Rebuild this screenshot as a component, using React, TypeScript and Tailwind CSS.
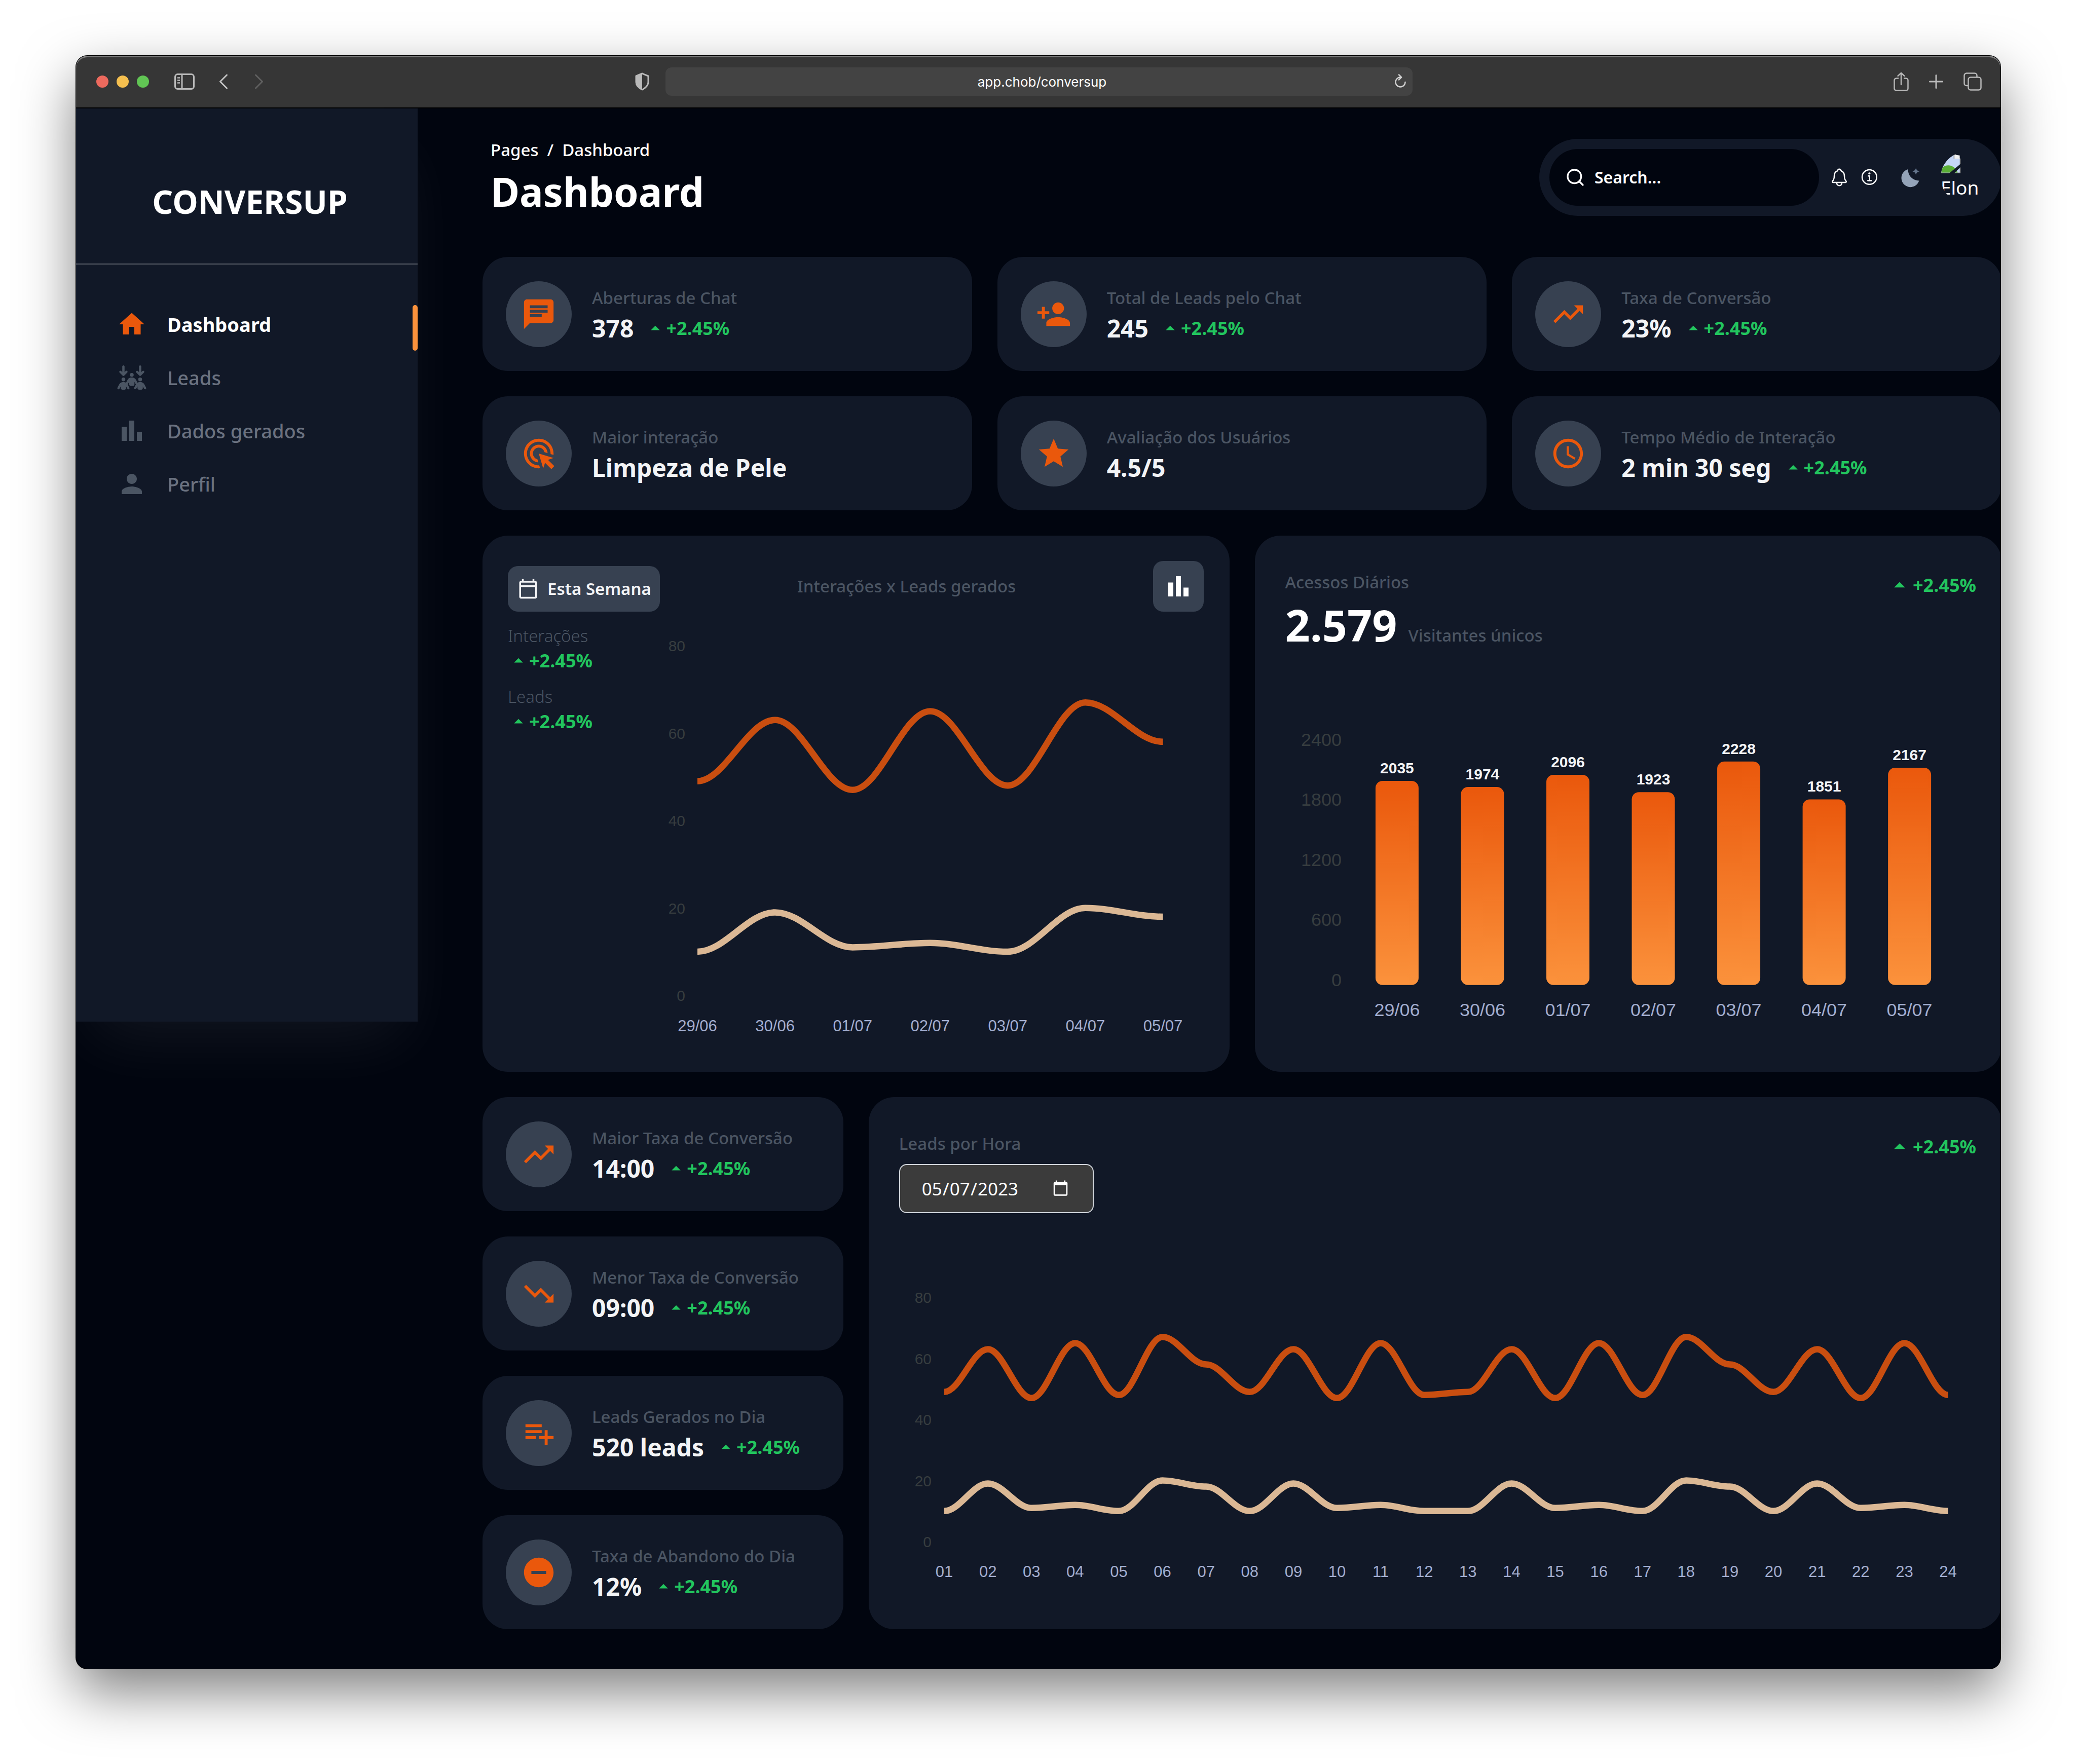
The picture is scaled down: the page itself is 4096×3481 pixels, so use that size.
import React from "react";
import type { ReactNode } from "react";
import type { IconType } from "react-icons";
import {
  MdAccessTime,
  MdAdsClick,
  MdArrowDropUp,
  MdBarChart,
  MdChat,
  MdHome,
  MdOutlineCalendarToday,
  MdPerson,
  MdPersonAdd,
  MdPlaylistAdd,
  MdRemoveCircle,
  MdStar,
  MdTrendingDown,
  MdTrendingUp,
} from "react-icons/md";
import { FaArrowsDownToPeople } from "react-icons/fa6";
import { FiSearch } from "react-icons/fi";
import { IoInformationCircleOutline, IoNotificationsOutline } from "react-icons/io5";

/* ---------- Browser chrome ---------- */

function SidebarToggleIcon() {
  return (
    <svg viewBox="0 0 40 32" className="h-8 w-10" fill="none" stroke="#b9b9b9" strokeWidth="3">
      <rect x="1.5" y="1.5" width="37" height="29" rx="5" />
      <path d="M15 2v28" />
      <path d="M6 8.500h5M6 13.500h5M6 18.500h5" strokeWidth="2.500" />
    </svg>
  );
}

function ShieldIcon() {
  return (
    <svg viewBox="0 0 30 36" className="h-9 w-[30px]">
      <path
        d="M15 2 27 7v12c0 6-4.500 11-12 15C7.500 30 3 25 3 19V7z"
        fill="none"
        stroke="#b9b9b9"
        strokeWidth="3"
        strokeLinejoin="round"
      />
      <path d="M15 2v32C7.500 30 3 25 3 19V7z" fill="#b9b9b9" />
    </svg>
  );
}

function ReloadIcon() {
  return (
    <svg viewBox="0 0 26 30" className="h-[30px] w-[26px]" fill="none" stroke="#d2d2d2" strokeWidth="2.500">
      <path d="M14 6.500a9.500 9.500 0 1 0 9.500 9.500" strokeLinecap="round" />
      <path d="M11 1.500 16 6.500 11 11.500" strokeLinecap="round" strokeLinejoin="round" />
    </svg>
  );
}

function ShareIcon() {
  return (
    <svg viewBox="0 0 30 38" className="h-[38px] w-[30px]" fill="none" stroke="#b9b9b9" strokeWidth="2.500">
      <path d="M10 12.500H5.500a4 4 0 0 0-4 4v16a4 4 0 0 0 4 4h19a4 4 0 0 0 4-4v-16a4 4 0 0 0-4-4H20" />
      <path d="M15 25V2M8.500 8 15 1.800 21.500 8" strokeLinecap="round" strokeLinejoin="round" />
    </svg>
  );
}

function TabsIcon() {
  return (
    <svg viewBox="0 0 36 36" className="h-9 w-9" fill="none" stroke="#b9b9b9" strokeWidth="2.500">
      <rect x="9.500" y="9.500" width="25" height="25" rx="4.500" />
      <path d="M9 26H6a4.500 4.500 0 0 1-4.500-4.500V6A4.500 4.500 0 0 1 6 1.500h16A4.500 4.500 0 0 1 26.500 6v3" />
    </svg>
  );
}

function TitleBar() {
  return (
    <div className="flex h-[104px] items-center rounded-t-[22px] border-b-2 border-black bg-[#363636] pr-[37px] pl-10 shadow-[inset_0_3px_0_#7d7d7d]">
      <div className="flex flex-1 items-center">
        <div className="flex gap-4">
          <button aria-label="Fechar" className="size-6 rounded-full bg-[#ed6a5e]" />
          <button aria-label="Minimizar" className="size-6 rounded-full bg-[#f5bf4f]" />
          <button aria-label="Maximizar" className="size-6 rounded-full bg-[#61c554]" />
        </div>
        <button aria-label="Barra lateral" className="ml-[50px]">
          <SidebarToggleIcon />
        </button>
        <button aria-label="Voltar" className="ml-12">
          <svg viewBox="0 0 18 30" className="h-[30px] w-[18px]" fill="none" stroke="#c4c4c4" strokeWidth="3">
            <path d="M15.500 2 2.500 15l13 13" strokeLinecap="round" strokeLinejoin="round" />
          </svg>
        </button>
        <button aria-label="Avançar" className="ml-[52px]">
          <svg viewBox="0 0 18 30" className="h-[30px] w-[18px]" fill="none" stroke="#606060" strokeWidth="3">
            <path d="m2.500 2 13 13-13 13" strokeLinecap="round" strokeLinejoin="round" />
          </svg>
        </button>
        <button aria-label="Privacidade" className="mr-[31px] ml-auto">
          <ShieldIcon />
        </button>
      </div>
      <div className="relative flex h-14 w-[39.6%] items-center justify-center rounded-xl bg-[#434343] pl-3">
        <span className="font-['Inter',sans-serif] text-[26px] text-white">app.chob/conversup</span>
        <button aria-label="Recarregar" className="absolute right-3">
          <ReloadIcon />
        </button>
      </div>
      <div className="flex flex-1 items-center justify-end">
        <button aria-label="Compartilhar">
          <ShareIcon />
        </button>
        <button aria-label="Nova aba" className="ml-10">
          <svg viewBox="0 0 28 28" className="size-7" stroke="#b9b9b9" strokeWidth="3" strokeLinecap="round">
            <path d="M14 1.500v25M1.500 14h25" />
          </svg>
        </button>
        <button aria-label="Abas" className="ml-10">
          <TabsIcon />
        </button>
      </div>
    </div>
  );
}

/* ---------- Sidebar ---------- */

const routes: { name: string; Icon: IconType; active?: boolean }[] = [
  { name: "Dashboard", Icon: MdHome, active: true },
  { name: "Leads", Icon: FaArrowsDownToPeople },
  { name: "Dados gerados", Icon: MdBarChart },
  { name: "Perfil", Icon: MdPerson },
];

function Sidebar() {
  return (
    <aside className="h-[1802px] w-[674px] shrink-0 bg-[#111827] shadow-[0_62px_125px_-30px_rgba(255,255,255,0.07)]">
      <div className="pt-[152px] pb-[90px] pl-3 text-center text-[64px] leading-[64px] font-bold text-white">
        CONVERSUP
      </div>
      <div className="h-0.5 bg-white/30" />
      <nav className="pt-[65px]">
        {routes.map(({ name, Icon, active }) => (
          <a key={name} href="#" className="relative flex h-[105px] items-center pl-20">
            <Icon className={active ? "size-[60px] text-[#ea580c]" : "size-[60px] text-[#4b5563]"} />
            <span
              className={
                active
                  ? "ml-10 text-[38px] leading-[60px] font-bold text-white"
                  : "ml-10 text-[38px] leading-[60px] font-medium text-[#6b7280]"
              }
            >
              {name}
            </span>
            {active && <span className="absolute right-0 bottom-0 h-[90px] w-2.5 rounded-[8px] bg-[#fb923c]" />}
          </a>
        ))}
      </nav>
    </aside>
  );
}

/* ---------- Header ---------- */

function MoonIcon() {
  return (
    <svg viewBox="0 0 46 49" className="h-[39px] w-9">
      <path d="M17.500 3.500A22.800 22.800 0 1 0 45.300 32 27 27 0 0 1 17.500 3.500z" fill="#94a3b8" />
      <path
        d="M37.300 0c1.200 5 3.500 7.500 8.700 8.700-5.200 1.200-7.500 3.700-8.700 8.700-1.200-5-3.500-7.500-8.700-8.700 5.200-1.200 7.500-3.700 8.700-8.700z"
        fill="#64748b"
      />
    </svg>
  );
}

function MissingPhotoIcon() {
  return (
    <svg viewBox="0 0 50 50" className="size-10">
      <path d="M0 0h34l15 14v36H0z" fill="#8f8f8f" />
      <path d="M2 2h30v12h15v34H2z" fill="#c5d6f6" />
      <path d="M2 40c6-14 32-14 40 8H2z" fill="#5aae36" />
      <path d="M34 4l13 2v8H34z" fill="#f0f0f0" />
      <path d="M50 26v8L33 50H21z" fill="#111827" />
    </svg>
  );
}

function Header() {
  return (
    <header className="flex items-start justify-between">
      <div className="pl-4 text-white">
        <nav className="flex gap-[17px] text-[33px] leading-[44px] font-medium">
          <a href="#">Pages</a>
          <span>/</span>
          <a href="#">Dashboard</a>
        </nav>
        <h1 className="mt-4 text-[78px] leading-[88px] font-bold">Dashboard</h1>
      </div>
      <div className="flex h-[152px] items-center rounded-full bg-[#111827] p-5">
        <label className="flex h-[112px] w-[532px] items-center rounded-full bg-[#01050f] pl-[31px] text-white">
          <FiSearch className="size-10 shrink-0" />
          <input
            type="text"
            aria-label="Search"
            placeholder="Search..."
            className="ml-[18px] w-[380px] bg-transparent text-[32px] font-semibold outline-none placeholder:text-white"
          />
        </label>
        <button aria-label="Notificações" className="ml-5 text-white">
          <IoNotificationsOutline className="size-10" />
        </button>
        <button aria-label="Informações" className="ml-5 text-white">
          <IoInformationCircleOutline className="size-10" />
        </button>
        <button aria-label="Tema" className="ml-[42px]">
          <MoonIcon />
        </button>
        <button className="ml-[42px] size-[100px] overflow-hidden rounded-full text-left text-[37px] leading-[56px] text-white">
          <MissingPhotoIcon />
          Elon
        </button>
      </div>
    </header>
  );
}

/* ---------- Cards ---------- */

function Delta({ large }: { large?: boolean }) {
  return (
    <span className="flex items-center text-[36px] leading-[50px] font-bold text-[#22c55e]">
      <MdArrowDropUp className={large ? "size-[52px]" : "size-[42px]"} />
      +2.45%
    </span>
  );
}

type CardData = { Icon: IconType; title: string; value: string; delta?: boolean };

function StatCard({ Icon, title, value, delta }: CardData) {
  return (
    <div className="flex h-[225px] items-center rounded-[50px] bg-[#111827] pl-[46px]">
      <div className="flex size-[130px] items-center justify-center rounded-full bg-[#374151] text-[#ea580c]">
        <Icon className="size-[70px]" />
      </div>
      <div className="ml-10">
        <p className="text-[33px] leading-[56px] font-medium text-[#4b5563]">{title}</p>
        <div className="flex items-center gap-[22px]">
          <h4 className="text-[48px] leading-[64px] font-bold text-[#f3f4f6]">{value}</h4>
          {delta && <Delta />}
        </div>
      </div>
    </div>
  );
}

const topCards: CardData[] = [
  { Icon: MdChat, title: "Aberturas de Chat", value: "378", delta: true },
  { Icon: MdPersonAdd, title: "Total de Leads pelo Chat", value: "245", delta: true },
  { Icon: MdTrendingUp, title: "Taxa de Conversão", value: "23%", delta: true },
  { Icon: MdAdsClick, title: "Maior interação", value: "Limpeza de Pele" },
  { Icon: MdStar, title: "Avaliação dos Usuários", value: "4.5/5" },
  { Icon: MdAccessTime, title: "Tempo Médio de Interação", value: "2 min 30 seg", delta: true },
];

const dayCards: CardData[] = [
  { Icon: MdTrendingUp, title: "Maior Taxa de Conversão", value: "14:00", delta: true },
  { Icon: MdTrendingDown, title: "Menor Taxa de Conversão", value: "09:00", delta: true },
  { Icon: MdPlaylistAdd, title: "Leads Gerados no Dia", value: "520 leads", delta: true },
  { Icon: MdRemoveCircle, title: "Taxa de Abandono do Dia", value: "12%", delta: true },
];

/* ---------- Charts ---------- */

const days = ["29/06", "30/06", "01/07", "02/07", "03/07", "04/07", "05/07"];
const hours = Array.from({ length: 24 }, (_, i) => String(i + 1).padStart(2, "0"));

const weekInteractions = [49, 63, 47, 65, 48, 67, 58];
const weekLeads = [10, 19, 11, 12, 10, 20, 18];
const hourInteractions = [
  49, 63, 47, 65, 48, 67, 58, 49, 63, 47, 65, 48, 49, 63, 47, 65, 48, 67, 58, 49, 63, 47, 65, 48,
];
const hourLeads = [
  10, 19, 11, 12, 10, 20, 18, 10, 19, 11, 12, 10, 10, 19, 11, 12, 10, 20, 18, 10, 19, 11, 12, 10,
];
const visitors = [2035, 1974, 2096, 1923, 2228, 1851, 2167];

type LineChartProps = {
  width: number;
  height: number;
  left: number;
  step: number;
  top: number;
  bottom: number;
  labelY: number;
  tickX: number;
  labels: string[];
  series: { values: number[]; color: string }[];
  title: string;
};

function LineChart(p: LineChartProps) {
  const y = (v: number) => p.bottom - ((p.bottom - p.top) * v) / 80;
  const path = (values: number[]) =>
    values
      .map((v, i) => {
        const x = p.left + i * p.step;
        if (i === 0) return `M${x} ${y(v)}`;
        const k = p.step * 0.35;
        return `C${x - p.step + k} ${y(values[i - 1])} ${x - k} ${y(v)} ${x} ${y(v)}`;
      })
      .join("");
  return (
    <svg
      viewBox={`0 0 ${p.width} ${p.height}`}
      className="block h-auto w-full font-['Liberation_Sans',Arial,sans-serif]"
      role="img"
      aria-label={p.title}
    >
      {[80, 60, 40, 20, 0].map((t) => (
        <text key={t} x={p.tickX} y={y(t) + 11} textAnchor="end" className="fill-[#373d3f] text-[30px]">
          {t}
        </text>
      ))}
      {p.labels.map((l, i) => (
        <text
          key={l}
          x={p.left + i * p.step}
          y={p.labelY + 11}
          textAnchor="middle"
          className="fill-[#a3aed0] text-[31px]"
        >
          {l}
        </text>
      ))}
      {p.series.map((s) => (
        <path key={s.color} d={path(s.values)} fill="none" stroke={s.color} strokeWidth="12.500" />
      ))}
    </svg>
  );
}

function VisitorsChart() {
  const base = 544;
  return (
    <svg
      viewBox="0 0 1374 664"
      className="block h-auto w-full font-['Liberation_Sans',Arial,sans-serif]"
      role="img"
      aria-label="Acessos Diários"
    >
      <defs>
        <linearGradient id="bar" x1="0" y1="0" x2="0" y2="1">
          <stop offset="0" stopColor="#ea580c" />
          <stop offset="1" stopColor="#fb923c" />
        </linearGradient>
      </defs>
      {[2400, 1800, 1200, 600, 0].map((t, i) => (
        <text key={t} x="121" y={72 + i * 118.5} textAnchor="end" className="fill-[#373d3f] text-[36px]">
          {t}
        </text>
      ))}
      {visitors.map((v, i) => {
        const h = v * 0.198;
        const x = 230.5 + i * 168.6;
        return (
          <g key={days[i]}>
            <rect x={x - 42.5} y={base - h} width="85" height={h} rx="14" fill="url(#bar)" />
            <text
              x={x}
              y={base - h - 15}
              textAnchor="middle"
              className="fill-[#f3f4f6] text-[30px] font-bold"
            >
              {v}
            </text>
            <text x={x} y="605" textAnchor="middle" className="fill-[#a3aed0] text-[36px]">
              {days[i]}
            </text>
          </g>
        );
      })}
    </svg>
  );
}

/* ---------- Panels ---------- */

function Panel({ className, children }: { className: string; children: ReactNode }) {
  return <section className={`rounded-[50px] bg-[#111827] p-[50px] ${className}`}>{children}</section>;
}

function InteractionsPanel() {
  return (
    <Panel className="">
      <div className="flex items-end justify-between">
        <button className="flex h-[90px] items-center gap-[17px] rounded-[20px] bg-[#374151] pr-[17px] pl-[19px] text-[33px] font-semibold text-[#f3f4f6]">
          <MdOutlineCalendarToday className="size-[42px]" />
          Esta Semana
        </button>
        <h2 className="self-center text-[33px] leading-[48px] font-medium text-[#4b5563]">
          Interações x Leads gerados
        </h2>
        <button
          aria-label="Gráfico"
          className="flex size-[100px] items-center justify-center rounded-[20px] bg-[#374151] text-white"
        >
          <MdBarChart className="size-[60px]" />
        </button>
      </div>
      <div className="mt-6 flex">
        <div className="flex w-[300px] shrink-0 flex-col gap-[22px]">
          {["Interações", "Leads"].map((l) => (
            <div key={l}>
              <p className="text-[33px] leading-[48px] font-light text-[#4b5563]">{l}</p>
              <Delta />
            </div>
          ))}
        </div>
        <div className="min-w-0 flex-1">
          <LineChart
            title="Interações x Leads gerados"
            width={1073}
            height={834}
            left={74}
            step={153}
            top={43}
            bottom={733}
            labelY={793}
            tickX={50}
            labels={days}
            series={[
              { values: weekInteractions, color: "#c94e10" },
              { values: weekLeads, color: "#dbb895" },
            ]}
          />
        </div>
      </div>
    </Panel>
  );
}

function VisitorsPanel() {
  return (
    <Panel className="">
      <div className="flex items-start justify-between pt-[18px] pl-2.5">
        <div>
          <h2 className="text-[33px] leading-[48px] font-medium text-[#4b5563]">Acessos Diários</h2>
          <p className="mt-4 flex items-baseline gap-[22px]">
            <span className="text-[86px] leading-[88px] font-bold text-white">2.579</span>
            <span className="text-[33px] leading-[48px] font-medium text-[#4b5563]">Visitantes únicos</span>
          </p>
        </div>
        <div className="pt-1">
          <Delta large />
        </div>
      </div>
      <div className="mt-[122px]">
        <VisitorsChart />
      </div>
    </Panel>
  );
}

function HoursPanel() {
  return (
    <Panel className="col-span-9">
      <div className="flex items-start justify-between pt-[18px] pl-2.5">
        <div>
          <label htmlFor="day" className="block text-[33px] leading-[48px] font-medium text-[#4b5563]">
            Leads por Hora
          </label>
          <input
            id="day"
            type="date"
            defaultValue="2023-05-07"
            className="mt-4 h-[97px] w-[384px] rounded-[15px] border-2 border-[#d1d5db] bg-[#3b3b3b] pr-[44px] pl-[42px] text-[35px] text-white scheme-dark"
          />
        </div>
        <div className="pt-1">
          <Delta large />
        </div>
      </div>
      <div className="mt-[104px]">
        <LineChart
          title="Leads por Hora"
          width={2135}
          height={664}
          left={99}
          step={86.1}
          top={62}
          bottom={544}
          labelY={603}
          tickX={74}
          labels={hours}
          series={[
            { values: hourInteractions, color: "#c94e10" },
            { values: hourLeads, color: "#dbb895" },
          ]}
        />
      </div>
    </Panel>
  );
}

/* ---------- Page ---------- */

export default function App() {
  return (
    <div className="bg-white pt-[110px] pr-[149px] pb-[186px] pl-[150px] font-['Noto_Sans',sans-serif]">
      <div className="overflow-hidden rounded-[22px] bg-[#01050f] shadow-[0_0_0_1px_#000,0_45px_110px_rgba(0,0,0,0.5)]">
        <TitleBar />
        <div className="flex items-start">
          <Sidebar />
          <main className="-mr-0.5 min-w-0 flex-1 pt-[60px] pb-[78px] pl-32">
            <Header />
            <div className="mt-[81px] grid grid-cols-3 gap-[50px]">
              {topCards.map((c) => (
                <StatCard key={c.title} {...c} />
              ))}
            </div>
            <div className="mt-[50px] grid grid-cols-2 gap-[50px]">
              <InteractionsPanel />
              <VisitorsPanel />
            </div>
            <div className="mt-[50px] grid grid-cols-12 gap-[50px]">
              <div className="col-span-3 flex flex-col gap-[50px]">
                {dayCards.map((c) => (
                  <StatCard key={c.title} {...c} />
                ))}
              </div>
              <HoursPanel />
            </div>
          </main>
        </div>
      </div>
    </div>
  );
}
